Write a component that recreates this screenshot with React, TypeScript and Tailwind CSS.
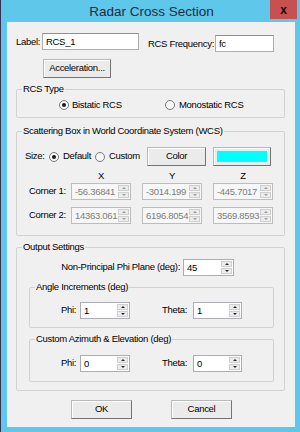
import React from 'react';

function Tri({ up, dim }: { up?: boolean; dim?: boolean }) {
  const c = dim ? 'border-b-[#9a9a9a]' : 'border-b-[#222]';
  const d = dim ? 'border-t-[#9a9a9a]' : 'border-t-[#222]';
  return up ? (
    <div className={`w-0 h-0 border-x-[2px] border-x-transparent border-b-[2px] ${c}`} />
  ) : (
    <div className={`w-0 h-0 border-x-[2px] border-x-transparent border-t-[2px] ${d}`} />
  );
}

function SpinBox({ value, className, disabled }: { value: string; className: string; disabled?: boolean }) {
  return (
    <div
      className={`flex h-[17px] border ${
        disabled ? 'border-[#bdbdbd] bg-[#f7f7f7] text-[#7d7d7d]' : 'border-[#abadb3] bg-white'
      } ${className}`}
    >
      <div className="flex-1 min-w-0 overflow-hidden whitespace-nowrap pl-[3px] leading-[15px]">{value}</div>
      <div className="w-[12px] shrink-0 flex flex-col gap-px py-px pr-px">
        <div className="flex-1 bg-[#ececec] border border-[#cfcfcf] flex items-center justify-center">
          <Tri up dim={disabled} />
        </div>
        <div className="flex-1 bg-[#ececec] border border-[#cfcfcf] flex items-center justify-center">
          <Tri dim={disabled} />
        </div>
      </div>
    </div>
  );
}

function TextBox({ value, className }: { value: string; className: string }) {
  return (
    <div className={`h-[17px] border border-[#abadb3] border-t-[#8f8f8f] bg-white pl-[3px] leading-[15px] ${className}`}>
      {value}
    </div>
  );
}

function Btn({ children, className }: { children?: React.ReactNode; className: string }) {
  return (
    <div
      className={`flex items-center justify-center border border-[#b9b9b9] border-r-[#747474] border-b-[#747474] bg-[#ebebeb] shadow-[inset_1px_1px_0_#ffffff] ${className}`}
    >
      {children}
    </div>
  );
}

function Radio({ checked, className = '' }: { checked?: boolean; className?: string }) {
  return (
    <div
      className={`w-[10px] h-[10px] shrink-0 rounded-full border border-[#7a7a7a] bg-[#f6f6f6] flex items-center justify-center ${className}`}
    >
      {checked && <div className="w-[4px] h-[4px] rounded-full bg-[#1a1a1a]" />}
    </div>
  );
}

function Group({ title, className, children }: { title: string; className: string; children?: React.ReactNode }) {
  return (
    <fieldset className={`border border-[#d2d2d2] rounded-[2px] ${className}`}>
      <legend className="ml-[5px] px-[1px] leading-[12px]">{title}</legend>
      {children}
    </fieldset>
  );
}

export default function App() {
  return (
    <div className="w-[300px] h-[432px] flex flex-col bg-[#5fc7ea] border-l border-[#3a3050] font-['Liberation_Sans',Arial,sans-serif] text-[9.5px] tracking-[-0.3px] text-black">
      {/* title bar */}
      <div className="relative h-[22px] shrink-0 flex items-center justify-center">
        <span className="text-[13.5px] tracking-normal text-[#1c2c40] pt-[2px] pl-[2px]">Radar Cross Section</span>
        <div className="absolute right-[3px] top-0 w-[27px] h-[19px] bg-[#c75050] flex items-center justify-center font-bold text-[12px] tracking-normal text-[#111]">
          x
        </div>
      </div>

      <div className="ml-[6px] mr-[5px] mb-[5px] flex-1 bg-[#f0f0f0] flex flex-col">
        <div className="mt-[11px] flex items-start h-[19px]">
          <span className="ml-[9px] w-[26px] leading-[17px]">Label:</span>
          <TextBox value="RCS_1" className="w-[97px]" />
          <span className="ml-[9px] w-[67px] mt-[2px] leading-[17px]">RCS Frequency:</span>
          <TextBox value="fc" className="w-[59px] mt-[2px]" />
        </div>

        <Btn className="mt-[7px] ml-[36px] w-[68px] h-[19px]">Acceleration...</Btn>

        <Group title="RCS Type" className="mt-[5px] ml-[9px] w-[269px] h-[35px]">
          <div className="mt-[4px] flex items-center h-[12px]">
            <Radio checked className="ml-[42px]" />
            <span className="ml-[3px] w-[93px]">Bistatic RCS</span>
            <Radio />
            <span className="ml-[4px]">Monostatic RCS</span>
          </div>
        </Group>

        <Group title="Scattering Box in World Coordinate System (WCS)" className="mt-[7px] ml-[9px] w-[269px] h-[111px]">
          <div className="mt-[10px] flex items-center h-[19px]">
            <span className="ml-[8px] w-[24px]">Size:</span>
            <Radio checked />
            <span className="ml-[4px] w-[32px]">Default</span>
            <Radio />
            <span className="ml-[4px] w-[38px]">Custom</span>
            <Btn className="w-[59px] h-[19px]">Color</Btn>
            <Btn className="ml-[7px] w-[58px] h-[19px] p-[3px]">
              <div className="w-full h-full bg-[#00ffff]" />
            </Btn>
          </div>
          <div className="mt-[4px] flex h-[12px] leading-[12px] pl-[54px] gap-[11px]">
            <span className="w-[60px] text-center">X</span>
            <span className="w-[60px] text-center">Y</span>
            <span className="w-[60px] text-center">Z</span>
          </div>
          <div className="mt-[1px] flex items-center h-[17px]">
            <span className="pl-[12px] w-[54px]">Corner 1:</span>
            <SpinBox disabled value="-56.36841" className="w-[60px]" />
            <SpinBox disabled value="-3014.199" className="ml-[11px] w-[60px]" />
            <SpinBox disabled value="-445.7017" className="ml-[11px] w-[60px]" />
          </div>
          <div className="mt-[7px] flex items-center h-[17px]">
            <span className="pl-[12px] w-[54px]">Corner 2:</span>
            <SpinBox disabled value="14363.061" className="w-[60px]" />
            <SpinBox disabled value="6196.8054" className="ml-[11px] w-[60px]" />
            <SpinBox disabled value="3569.8593" className="ml-[11px] w-[60px]" />
          </div>
        </Group>

        <Group title="Output Settings" className="mt-[5px] ml-[9px] w-[269px] h-[150px]">
          <div className="mt-[6px] flex items-center h-[17px]">
            <span className="w-[166px] text-right pr-[3px]">Non-Principal Phi Plane (deg):</span>
            <SpinBox value="45" className="w-[51px]" />
          </div>
          <Group title="Angle Increments (deg)" className="mt-[5px] ml-[12px] w-[245px] h-[47px]">
            <div className="mt-[9px] flex items-center h-[17px]">
              <span className="ml-[31px] w-[19px]">Phi:</span>
              <SpinBox value="1" className="w-[50px]" />
              <span className="ml-[32px] w-[31px]">Theta:</span>
              <SpinBox value="1" className="w-[49px]" />
            </div>
          </Group>
          <Group title="Custom Azimuth & Elevation (deg)" className="mt-[5px] ml-[12px] w-[245px] h-[49px]">
            <div className="mt-[10px] flex items-center h-[17px]">
              <span className="ml-[31px] w-[19px]">Phi:</span>
              <SpinBox value="0" className="w-[50px]" />
              <span className="ml-[32px] w-[31px]">Theta:</span>
              <SpinBox value="0" className="w-[49px]" />
            </div>
          </Group>
        </Group>

        <div className="mt-[9px] flex">
          <Btn className="ml-[64px] w-[61px] h-[19px] border-[#707070]">OK</Btn>
          <Btn className="ml-[39px] w-[61px] h-[19px]">Cancel</Btn>
        </div>
      </div>
    </div>
  );
}
